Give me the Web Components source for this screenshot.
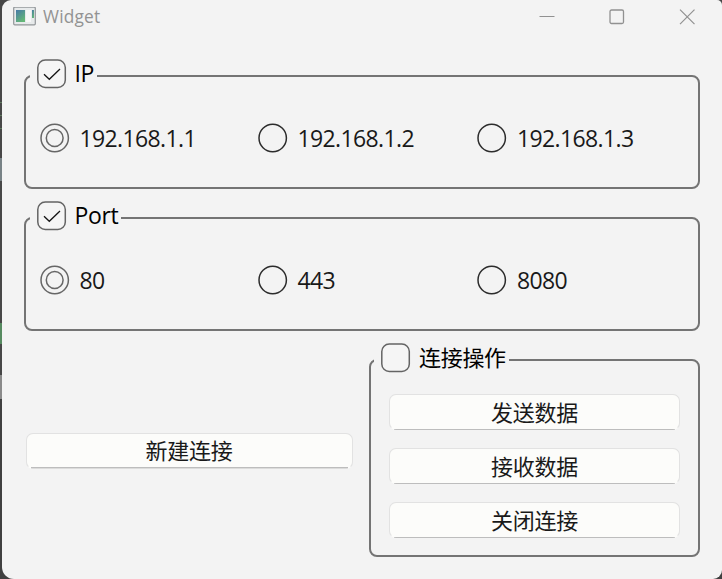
<!DOCTYPE html>
<html lang="zh-CN">
<head>
<meta charset="utf-8">
<title>Widget</title>
<style>
html,body{margin:0;width:722px;height:579px;overflow:hidden;background:#3d3d3d}
body{font-family:"Open Sans","Noto Sans CJK SC",sans-serif;color:#000;
  background:linear-gradient(#474747 0 102px,#5f7a5f 102px 103px,#474747 103px 115px,#5f7a5f 115px 116px,#474747 116px 128px,#5f7a5f 128px 129px,#474747 129px 158px,#788286 158px 181px,#474747 181px 323px,#568a60 323px 344px,#474747 344px 375px,#8a8a8a 375px 399px,#404040 399px)}
</style>
</head>
<body>
<app-window caption="Widget">
  <group-box caption="IP" checked>
    <radio-row>
      <radio-item checked>192.168.1.1</radio-item>
      <radio-item>192.168.1.2</radio-item>
      <radio-item>192.168.1.3</radio-item>
    </radio-row>
  </group-box>
  <group-box caption="Port" checked>
    <radio-row>
      <radio-item checked>80</radio-item>
      <radio-item>443</radio-item>
      <radio-item>8080</radio-item>
    </radio-row>
  </group-box>
  <split-row>
    <push-button>新建连接</push-button>
    <group-box caption="连接操作" cjk>
      <button-stack>
        <push-button>发送数据</push-button>
        <push-button>接收数据</push-button>
        <push-button>关闭连接</push-button>
      </button-stack>
    </group-box>
  </split-row>
</app-window>
<script>
class Base extends HTMLElement {
  render(html) { this.attachShadow({mode: 'open'}).innerHTML = html; }
}

customElements.define('title-bar', class extends Base {
  connectedCallback() {
    this.render(`<style>
      :host{display:flex;align-items:center;height:33px;padding:0 27px 0 11px;color:#929292;font-size:17.3px;box-sizing:border-box}
      .name{flex:1;margin-left:6px;line-height:33px;letter-spacing:.2px}
      .controls{display:flex;gap:54px}
      svg{display:block}
    </style>
    <svg width="24" height="19" viewBox="0 0 24 19">
      <defs><linearGradient id="g" x1="0" y1="0" x2=".6" y2="1"><stop offset="0" stop-color="#4779a8"/><stop offset="1" stop-color="#64b777"/></linearGradient></defs>
      <rect x=".7" y=".2" width="21.6" height="17.6" rx="1" fill="#e7eaeb" stroke="#929699" stroke-width="1.2"/>
      <rect x="3" y="3" width="9" height="12" fill="url(#g)"/>
      <rect x="13" y="3" width="5" height="12" fill="#f7f7f7"/>
      <rect x="19" y="3" width="2" height="8" fill="url(#g)"/>
    </svg>
    <span class="name">${this.getAttribute('caption')}</span>
    <div class="controls">
      <svg width="16" height="16" viewBox="0 0 16 16"><path d="M.5 7.5h15" stroke="#919191" stroke-width="1"/></svg>
      <svg width="16" height="16" viewBox="0 0 16 16"><rect x="1" y="1" width="13.5" height="13.5" rx="1.5" fill="none" stroke="#919191" stroke-width="1.3"/></svg>
      <svg width="16" height="16" viewBox="0 0 16 16"><path d="M1 .7l14.5 14.5M15.5 .7L1 15.2" stroke="#919191" stroke-width="1.2"/></svg>
    </div>`);
  }
});

customElements.define('app-window', class extends Base {
  connectedCallback() {
    this.render(`<style>
      :host{display:flex;flex-direction:column;height:579px;margin-left:2px;background:#f3f3f3;border-radius:9px 5px 9px 12px;box-sizing:border-box}
      .content{display:flex;flex-direction:column;gap:11px;padding:25px 22px 0 21.5px}
    </style>
    <title-bar caption="${this.getAttribute('caption')}"></title-bar>
    <div class="content"><slot></slot></div>`);
  }
});

customElements.define('check-mark', class extends Base {
  connectedCallback() {
    const tick = this.hasAttribute('checked') ? '<path d="M7 15.2l5.3 5.1L23 10" fill="none" stroke="#151515" stroke-width="1.3"/>' : '';
    this.render(`<style>:host{display:block;width:30px;height:30px}svg{display:block}</style>
    <svg width="30" height="30" viewBox="0 0 30 30"><rect x=".8" y="1" width="27.5" height="27.5" rx="7.5" fill="#f5f5f5" stroke="#646464" stroke-width="1.5"/>${tick}</svg>`);
  }
});

customElements.define('group-box', class extends Base {
  connectedCallback() {
    const cjk = this.hasAttribute('cjk');
    this.render(`<style>
      :host{display:block}
      fieldset{margin:0;padding:0;border:2px solid #747474;border-radius:8px;min-width:0}
      legend{display:flex;gap:8px;margin-left:${cjk ? '3px' : '4px'};padding:1px 3px 5px 7px;height:30px;
        font-size:${cjk ? '22px' : '23px'};letter-spacing:${cjk ? '-.3px' : '-.35px'}}
      .text{display:block;white-space:nowrap;line-height:28px}
    </style>
    <fieldset><legend><check-mark ${this.hasAttribute('checked') ? 'checked' : ''}></check-mark><span class="text">${this.getAttribute('caption')}</span></legend><slot></slot></fieldset>`);
  }
});

customElements.define('radio-row', class extends Base {
  connectedCallback() {
    this.render(`<style>
      :host{display:grid;grid-template-columns:218px 219.5px 1fr;align-items:center;height:93px;padding:0 0 6px 14px;box-sizing:border-box}
    </style><slot></slot>`);
  }
});

customElements.define('radio-item', class extends Base {
  connectedCallback() {
    const on = this.hasAttribute('checked');
    const c = on ? '#666' : '#2c2c2c';
    this.render(`<style>
      :host{display:flex;align-items:center;gap:10px;font-size:23px;line-height:30px;letter-spacing:-.62px;color:#191919}
      svg{display:block;flex:none}
    </style>
    <svg width="30" height="30" viewBox="0 0 30 30"><g fill="none" stroke="${c}" stroke-width="1.5"><circle cx="14.7" cy="15" r="13.7"/>${on ? '<circle cx="14.7" cy="15" r="8.4"/>' : ''}</g></svg>
    <span><slot></slot></span>`);
  }
});

customElements.define('push-button', class extends Base {
  connectedCallback() {
    this.render(`<style>
      :host{display:block}
      button{display:block;width:100%;height:36px;margin:0;padding:0 0 1px;box-sizing:border-box;border:1px solid #e2e2e2;border-radius:7px;
        background:linear-gradient(90deg,transparent 5px,#bdbdbd 5px,#bdbdbd calc(100% - 5px),transparent calc(100% - 5px)) 0 100%/100% 1.5px no-repeat border-box,#fcfcfa;
        border-bottom-color:transparent;font:22px/32px "Open Sans","Noto Sans CJK SC",sans-serif;letter-spacing:-.2px;color:#191919}
    </style><button><slot></slot></button>`);
  }
});

customElements.define('split-row', class extends Base {
  connectedCallback() {
    this.render(`<style>
      :host{display:grid;grid-template-columns:327px 331px;justify-content:space-between;align-items:center;padding-left:2px}
      ::slotted(push-button){margin-top:2px}
    </style><slot></slot>`);
  }
});

customElements.define('button-stack', class extends Base {
  connectedCallback() {
    this.render(`<style>
      :host{display:flex;flex-direction:column;gap:18px;padding:16px 18px 17px}
    </style><slot></slot>`);
  }
});
</script>
</body>
</html>
